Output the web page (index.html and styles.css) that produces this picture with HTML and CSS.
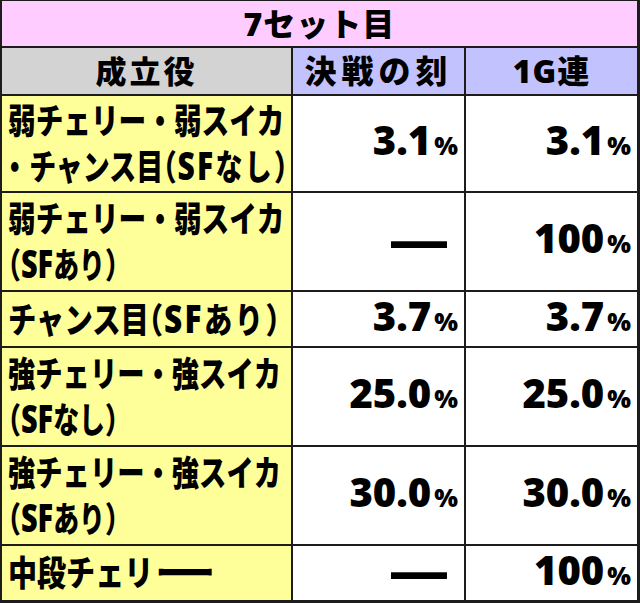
FILE: index.html
```html
<!DOCTYPE html>
<html lang="ja">
<head>
<meta charset="utf-8">
<title>7セット目</title>
<link rel="stylesheet" href="styles.css">
</head>
<body>
<div class="sheet">
  <div class="title">7セット目</div>
  <div class="head head-name">成立役</div>
  <div class="head head-val">決戦の刻</div>
  <div class="head head-val head-tight">1G連</div>

  <div class="label">
    <span class="ln s79">弱チェリー・弱スイカ</span>
    <span class="ln s77"><span class="dot-lead">・</span>チャンス目<span class="grp"><span class="po">（</span><span class="sf">SF</span>なし<span class="pc">）</span></span></span>
  </div>
  <div class="val"><span class="fig"><span class="num">3.1</span><span class="pct">%</span></span></div>
  <div class="val"><span class="fig"><span class="num">3.1</span><span class="pct">%</span></span></div>

  <div class="label">
    <span class="ln s79">弱チェリー・弱スイカ</span>
    <span class="ln s74"><span class="po po-lead">（</span><span class="sf">SF</span>あり<span class="pc">）</span></span>
  </div>
  <div class="val"><span class="dash">━</span></div>
  <div class="val"><span class="fig"><span class="num">100</span><span class="pct">%</span></span></div>

  <div class="label">
    <span class="ln s81">チャンス目<span class="grp"><span class="po">（</span><span class="sf">SF</span>あり<span class="pc">）</span></span></span>
  </div>
  <div class="val"><span class="fig"><span class="num">3.7</span><span class="pct">%</span></span></div>
  <div class="val"><span class="fig"><span class="num">3.7</span><span class="pct">%</span></span></div>

  <div class="label">
    <span class="ln s78">強チェリー・強スイカ</span>
    <span class="ln s74"><span class="po po-lead">（</span><span class="sf">SF</span>なし<span class="pc">）</span></span>
  </div>
  <div class="val"><span class="fig"><span class="num">25.0</span><span class="pct">%</span></span></div>
  <div class="val"><span class="fig"><span class="num">25.0</span><span class="pct">%</span></span></div>

  <div class="label">
    <span class="ln s78">強チェリー・強スイカ</span>
    <span class="ln s74"><span class="po po-lead">（</span><span class="sf">SF</span>あり<span class="pc">）</span></span>
  </div>
  <div class="val"><span class="fig"><span class="num">30.0</span><span class="pct">%</span></span></div>
  <div class="val"><span class="fig"><span class="num">30.0</span><span class="pct">%</span></span></div>

  <div class="label">
    <span class="ln s83">中段チェリ<span class="long">ー</span></span>
  </div>
  <div class="val"><span class="dash">━</span></div>
  <div class="val"><span class="fig"><span class="num">100</span><span class="pct">%</span></span></div>
</div>
</body>
</html>
```

FILE: styles.css
```css
html, body {
  margin: 0;
  padding: 0;
  background: #ffffff;
}

body {
  font-family: "Open Sans", "Noto Sans CJK JP", sans-serif;
  color: #000;
}

.sheet {
  display: grid;
  grid-template-columns: 289px 171px 171px;
  grid-template-rows: 45px 46px 95px 97px 54px 97px 97px 54px;
  gap: 2px;
  padding: 1px 3px 3px 2px;
  width: 640px;
  height: 603px;
  box-sizing: border-box;
  background: #1c1c1c;
  overflow: hidden;
}

.title {
  grid-column: 1 / 4;
  background: #ffccff;
  display: flex;
  align-items: center;
  justify-content: center;
  font-size: 32px;
  font-weight: 900;
  letter-spacing: 1px;
  line-height: 1;
}

.head {
  display: flex;
  align-items: center;
  justify-content: center;
  font-size: 31px;
  font-weight: 900;
  line-height: 1;
}

.head-name {
  background: #d3d3d3;
  letter-spacing: 3px;
}

.head-val {
  background: #c2c2ff;
  font-size: 32px;
  letter-spacing: 5px;
}

.head-val.head-tight {
  letter-spacing: 1px;
}

/* item label cells */
.label {
  background: #ffff99;
  display: flex;
  flex-direction: column;
  justify-content: center;
  padding-left: 6px;
  overflow: hidden;
}

.ln {
  display: block;
  font-size: 35px;
  font-weight: 900;
  line-height: 44px;
  white-space: nowrap;
  transform-origin: left center;
}

.s74 { transform: scaleX(0.74); }
.s77 { transform: scaleX(0.77); }
.s78 { transform: scaleX(0.78); }
.s79 { transform: scaleX(0.79); }
.s81 { transform: scaleX(0.81); }
.s83 { transform: scaleX(0.83); }

/* half-width punctuation */
.dot-lead {
  font-feature-settings: "halt";
  letter-spacing: 10px;
}

.grp {
  letter-spacing: 3px;
}

.po {
  font-feature-settings: "halt";
  letter-spacing: 1px;
}

.po-lead {
  letter-spacing: 0;
}

.pc {
  font-feature-settings: "halt";
  letter-spacing: 0;
}

.sf {
  font-size: 39px;
}

.long {
  display: inline-block;
  transform: scaleX(2.2);
  transform-origin: left center;
}

/* value cells */
.val {
  background: #ffffff;
  display: flex;
  align-items: center;
  justify-content: flex-end;
  padding-right: 6px;
  white-space: nowrap;
}

.fig {
  display: block;
  font-weight: 800;
  line-height: 40px;
  padding-top: 2px;
}

.num {
  font-size: 40px;
}

.pct {
  font-size: 25px;
  margin-left: 3px;
}

.dash {
  display: block;
  font-family: "Noto Sans CJK JP", sans-serif;
  font-size: 56px;
  font-weight: 900;
  line-height: 40px;
  margin-right: 11px;
}
```
